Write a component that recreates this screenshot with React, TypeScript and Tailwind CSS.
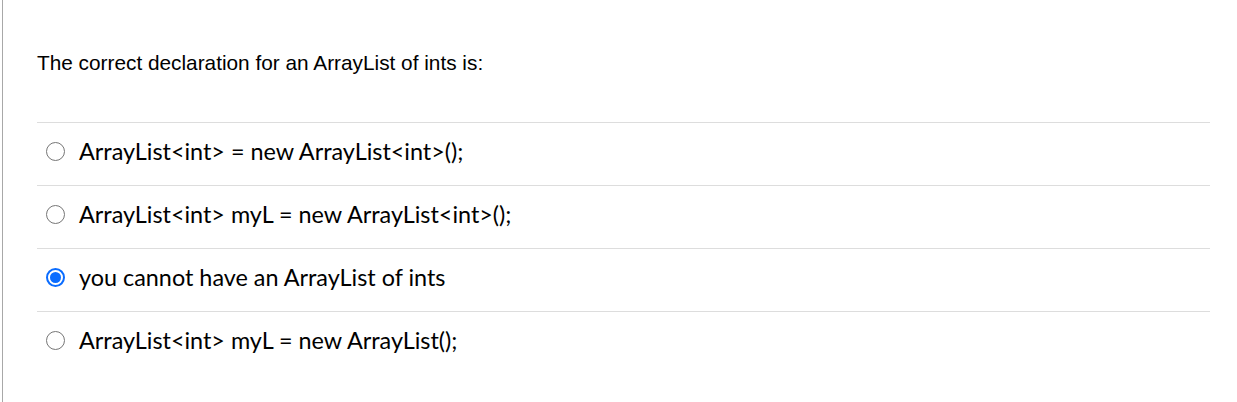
import React from "react";

const answers = [
  { text: "ArrayList<int> = new ArrayList<int>();", checked: false },
  { text: "ArrayList<int> myL = new ArrayList<int>();", checked: false },
  { text: "you cannot have an ArrayList of ints", checked: true },
  { text: "ArrayList<int> myL = new ArrayList();", checked: false },
];

function Radio({ checked }: { checked: boolean }) {
  if (checked) {
    return (
      <span className="w-[19px] h-[19px] shrink-0 rounded-full border-[2px] border-[#0a6cff] flex items-center justify-center">
        <span className="w-[11px] h-[11px] rounded-full bg-[#0a6cff]" />
      </span>
    );
  }
  return (
    <span className="w-[19px] h-[19px] shrink-0 rounded-full border border-[#767676] bg-white" />
  );
}

export default function App() {
  return (
    <div className="w-[1237px] h-[402px] bg-white overflow-hidden">
      <div className="ml-[2px] h-full border-l border-[#a8a8a8] pl-[34px] pr-[27px]">
        <div
          className="pt-[51px] pb-[47px] text-[20.8px] leading-[24px] text-black"
          style={{ fontFamily: '"Liberation Sans", Arial, sans-serif' }}
        >
          The correct declaration for an ArrayList of ints is:
        </div>
        <div className="flex flex-col">
          {answers.map((a, i) => (
            <label
              key={i}
              className="flex items-center h-[63px] border-t border-[#dddddd] pl-[9px] pb-[5px] text-[23.4px] text-black"
              style={{ fontFamily: "Lato, sans-serif" }}
            >
              <Radio checked={a.checked} />
              <span className="ml-[14px]">{a.text}</span>
            </label>
          ))}
        </div>
      </div>
    </div>
  );
}
